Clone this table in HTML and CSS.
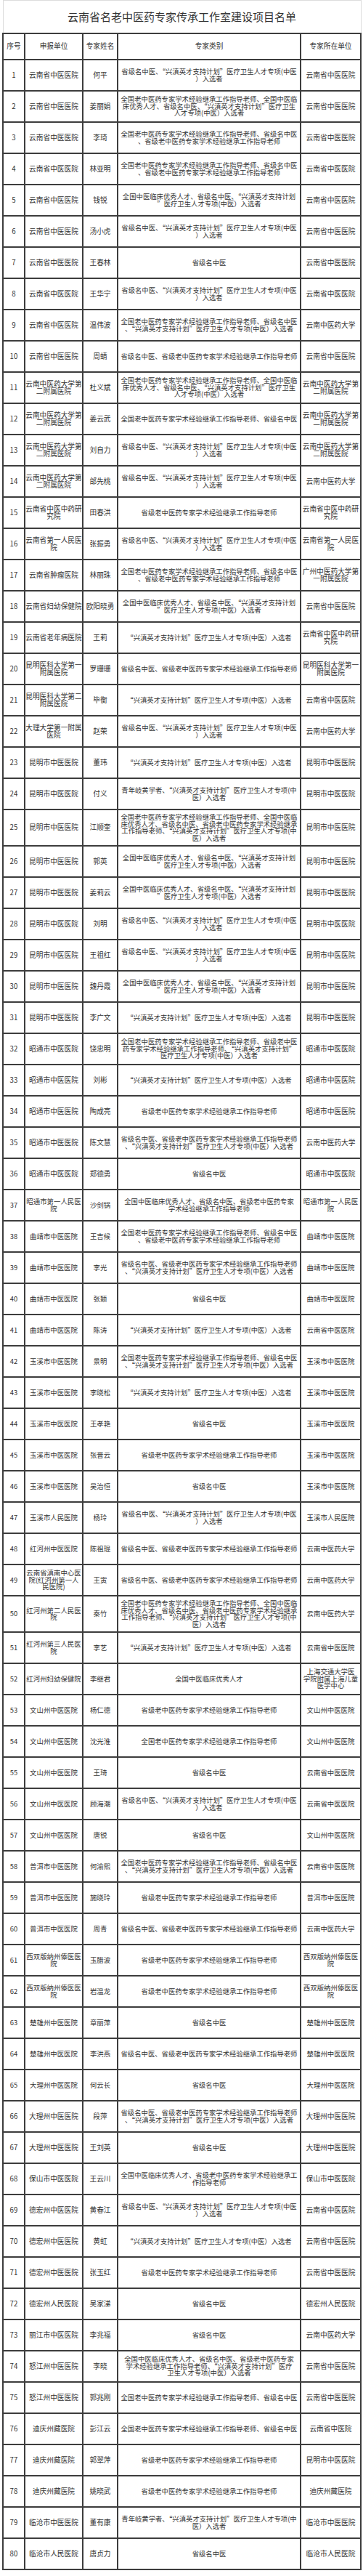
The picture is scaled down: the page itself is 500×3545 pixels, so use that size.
FILE: index.html
```html
<!DOCTYPE html>
<html lang="zh-CN">
<head>
<meta charset="utf-8">
<title>云南省名老中医药专家传承工作室建设项目名单</title>
<link rel="stylesheet" href="styles.css">
</head>
<body>
<table class="sheet">
<colgroup><col class="c1"><col class="c2"><col class="c3"><col class="c4"><col class="c5"></colgroup>
<thead>
<tr class="title"><th colspan="5">云南省名老中医药专家传承工作室建设项目名单</th></tr>
<tr class="head"><th>序号</th><th>申报单位</th><th>专家姓名</th><th>专家类别</th><th>专家所在单位</th></tr>
</thead>
<tbody>
<tr class="l"><td>1</td><td>云南省中医医院</td><td>何平</td><td class="cat">省级名中医、“兴滇英才支持计划”医疗卫生人才专项(中医<br>）入选者</td><td>云南省中医医院</td></tr>
<tr class="l"><td>2</td><td>云南省中医医院</td><td>姜丽娟</td><td class="cat">全国老中医药专家学术经验继承工作指导老师、全国中医临<br>床优秀人才、省级名中医、“兴滇英才支持计划”医疗卫生<br>人才专项(中医）入选者</td><td>云南省中医医院</td></tr>
<tr class="l"><td>3</td><td>云南省中医医院</td><td>李琦</td><td class="cat">全国老中医药专家学术经验继承工作指导老师、省级名中医<br>、省级老中医药专家学术经验继承工作指导老师</td><td>云南省中医医院</td></tr>
<tr class="l"><td>4</td><td>云南省中医医院</td><td>林亚明</td><td class="cat">全国老中医药专家学术经验继承工作指导老师、省级名中医<br>、省级老中医药专家学术经验继承工作指导老师</td><td>云南省中医医院</td></tr>
<tr class="l"><td>5</td><td>云南省中医医院</td><td>钱锐</td><td class="cat">全国中医临床优秀人才、省级名中医、“兴滇英才支持计划<br>”医疗卫生人才专项(中医）入选者</td><td>云南省中医医院</td></tr>
<tr class="l"><td>6</td><td>云南省中医医院</td><td>汤小虎</td><td class="cat">省级名中医、“兴滇英才支持计划”医疗卫生人才专项(中医<br>）入选者</td><td>云南省中医医院</td></tr>
<tr class="l"><td>7</td><td>云南省中医医院</td><td>王春林</td><td class="cat">省级名中医</td><td>云南省中医医院</td></tr>
<tr class="l"><td>8</td><td>云南省中医医院</td><td>王华宁</td><td class="cat">省级名中医、“兴滇英才支持计划”医疗卫生人才专项(中医<br>）入选者</td><td>云南省中医医院</td></tr>
<tr class="l"><td>9</td><td>云南省中医医院</td><td>温伟波</td><td class="cat">全国老中医药专家学术经验继承工作指导老师、省级名中医<br>、“兴滇英才支持计划”医疗卫生人才专项(中医）入选者</td><td>云南中医药大学</td></tr>
<tr class="l"><td>10</td><td>云南省中医医院</td><td>周蜻</td><td class="cat">省级名中医、省级老中医药专家学术经验继承工作指导老师</td><td>云南省中医医院</td></tr>
<tr class="l"><td>11</td><td>云南中医药大学第<br>二附属医院</td><td>杜义斌</td><td class="cat">全国老中医药专家学术经验继承工作指导老师、全国中医临<br>床优秀人才、省级名中医、“兴滇英才支持计划”医疗卫生<br>人才专项(中医）入选者</td><td>云南中医药大学第<br>二附属医院</td></tr>
<tr class="l"><td>12</td><td>云南中医药大学第<br>二附属医院</td><td>姜云武</td><td class="cat">全国老中医药专家学术经验继承工作指导老师、省级名中医</td><td>云南中医药大学第<br>二附属医院</td></tr>
<tr class="l"><td>13</td><td>云南中医药大学第<br>二附属医院</td><td>刘自力</td><td class="cat">省级名中医、“兴滇英才支持计划”医疗卫生人才专项(中医<br>）入选者</td><td>云南中医药大学第<br>二附属医院</td></tr>
<tr class="l"><td>14</td><td>云南中医药大学第<br>二附属医院</td><td>邰先桃</td><td class="cat">省级名中医、“兴滇英才支持计划”医疗卫生人才专项(中医<br>）入选者</td><td>云南中医药大学</td></tr>
<tr class="l"><td>15</td><td>云南省中医中药研<br>究院</td><td>田春洪</td><td class="cat">省级老中医药专家学术经验继承工作指导老师</td><td>云南省中医中药研<br>究院</td></tr>
<tr class="l"><td>16</td><td>云南省第一人民医<br>院</td><td>张振勇</td><td class="cat">省级名中医、“兴滇英才支持计划”医疗卫生人才专项(中医<br>）入选者</td><td>云南省第一人民医<br>院</td></tr>
<tr class="l"><td>17</td><td>云南省肿瘤医院</td><td>林丽珠</td><td class="cat">全国老中医药专家学术经验继承工作指导老师、省级名中医<br>、省级老中医药专家学术经验继承工作指导老师</td><td>广州中医药大学第<br>一附属医院</td></tr>
<tr class="l"><td>18</td><td>云南省妇幼保健院</td><td>欧阳晓勇</td><td class="cat">全国中医临床优秀人才、省级名中医、“兴滇英才支持计划<br>”医疗卫生人才专项(中医）入选者</td><td>云南省中医医院</td></tr>
<tr class="l"><td>19</td><td>云南省老年病医院</td><td>王莉</td><td class="cat">“兴滇英才支持计划”医疗卫生人才专项(中医）入选者</td><td>云南省中医中药研<br>究院</td></tr>
<tr class="l"><td>20</td><td>昆明医科大学第一<br>附属医院</td><td>罗珊珊</td><td class="cat">省级名中医、省级老中医药专家学术经验继承工作指导老师</td><td>昆明医科大学第一<br>附属医院</td></tr>
<tr class="l"><td>21</td><td>昆明医科大学第二<br>附属医院</td><td>毕衡</td><td class="cat">“兴滇英才支持计划”医疗卫生人才专项(中医）入选者</td><td>云南省中医医院</td></tr>
<tr class="l"><td>22</td><td>大理大学第一附属<br>医院</td><td>赵荣</td><td class="cat">省级名中医、“兴滇英才支持计划”医疗卫生人才专项(中医<br>）入选者</td><td>云南中医药大学</td></tr>
<tr class="l"><td>23</td><td>昆明市中医医院</td><td>董玮</td><td class="cat">“兴滇英才支持计划”医疗卫生人才专项(中医）入选者</td><td>昆明市中医医院</td></tr>
<tr class="l"><td>24</td><td>昆明市中医医院</td><td>付义</td><td class="cat">青年岐黄学者、“兴滇英才支持计划”医疗卫生人才专项(中<br>医）入选者</td><td>昆明市中医医院</td></tr>
<tr class="l"><td>25</td><td>昆明市中医医院</td><td>江顺奎</td><td class="cat">全国老中医药专家学术经验继承工作指导老师、全国中医临<br>床优秀人才、省级名中医、省级老中医药专家学术经验继承<br>工作指导老师、“兴滇英才支持计划”医疗卫生人才专项(中<br>医）入选者</td><td>昆明市中医医院</td></tr>
<tr class="l"><td>26</td><td>昆明市中医医院</td><td>郭英</td><td class="cat">全国中医临床优秀人才、省级名中医、“兴滇英才支持计划<br>”医疗卫生人才专项(中医）入选者</td><td>昆明市中医医院</td></tr>
<tr class="l"><td>27</td><td>昆明市中医医院</td><td>姜莉云</td><td class="cat">全国中医临床优秀人才、省级名中医、“兴滇英才支持计划<br>”医疗卫生人才专项(中医）入选者</td><td>昆明市中医医院</td></tr>
<tr class="l"><td>28</td><td>昆明市中医医院</td><td>刘明</td><td class="cat">省级名中医、“兴滇英才支持计划”医疗卫生人才专项(中医<br>）入选者</td><td>昆明市中医医院</td></tr>
<tr class="l"><td>29</td><td>昆明市中医医院</td><td>王祖红</td><td class="cat">省级名中医、“兴滇英才支持计划”医疗卫生人才专项(中医<br>）入选者</td><td>昆明市中医医院</td></tr>
<tr class="l"><td>30</td><td>昆明市中医医院</td><td>魏丹霞</td><td class="cat">全国中医临床优秀人才、省级名中医、“兴滇英才支持计划<br>”医疗卫生人才专项(中医）入选者</td><td>昆明市中医医院</td></tr>
<tr class="l"><td>31</td><td>昆明市中医医院</td><td>李广文</td><td class="cat">“兴滇英才支持计划”医疗卫生人才专项(中医）入选者</td><td>昆明市中医医院</td></tr>
<tr class="l"><td>32</td><td>昭通市中医医院</td><td>饶忠明</td><td class="cat">全国老中医药专家学术经验继承工作指导老师、省级老中医<br>药专家学术经验继承工作指导老师、“兴滇英才支持计划”<br>医疗卫生人才专项(中医）入选者</td><td>昭通市中医医院</td></tr>
<tr class="l"><td>33</td><td>昭通市中医医院</td><td>刘彬</td><td class="cat">“兴滇英才支持计划”医疗卫生人才专项(中医）入选者</td><td>昭通市中医医院</td></tr>
<tr class="l"><td>34</td><td>昭通市中医医院</td><td>陶成亮</td><td class="cat">省级老中医药专家学术经验继承工作指导老师</td><td>昭通市中医医院</td></tr>
<tr class="l"><td>35</td><td>昭通市中医医院</td><td>陈文慧</td><td class="cat">省级名中医、省级老中医药专家学术经验继承工作指导老师<br>、“兴滇英才支持计划”医疗卫生人才专项(中医）入选者</td><td>云南中医药大学</td></tr>
<tr class="l"><td>36</td><td>昭通市中医医院</td><td>郑德勇</td><td class="cat">省级名中医</td><td>昭通市中医医院</td></tr>
<tr class="t"><td>37</td><td>昭通市第一人民医<br>院</td><td>沙剑锅</td><td class="cat">全国中医临床优秀人才、省级名中医、省级老中医药专家<br>学术经验继承工作指导老师</td><td>昭通市第一人民医<br>院</td></tr>
<tr class="t"><td>38</td><td>曲靖市中医医院</td><td>王吉候</td><td class="cat">全国老中医药专家学术经验继承工作指导老师、省级名中医<br>、省级老中医药专家学术经验继承工作指导老师</td><td>曲靖市中医医院</td></tr>
<tr class="t"><td>39</td><td>曲靖市中医医院</td><td>李光</td><td class="cat">省级名中医、省级老中医药专家学术经验继承工作指导老师<br>、“兴滇英才支持计划”医疗卫生人才专项(中医）入选者</td><td>曲靖市中医医院</td></tr>
<tr class="t"><td>40</td><td>曲靖市中医医院</td><td>张颖</td><td class="cat">省级名中医</td><td>曲靖市中医医院</td></tr>
<tr class="t"><td>41</td><td>曲靖市中医医院</td><td>陈涛</td><td class="cat">“兴滇英才支持计划”医疗卫生人才专项(中医）入选者</td><td>云南省中医医院</td></tr>
<tr class="t"><td>42</td><td>玉溪市中医医院</td><td>景明</td><td class="cat">全国老中医药专家学术经验继承工作指导老师、省级名中医<br>、“兴滇英才支持计划”医疗卫生人才专项(中医）入选者</td><td>玉溪市中医医院</td></tr>
<tr class="t"><td>43</td><td>玉溪市中医医院</td><td>李晓松</td><td class="cat">“兴滇英才支持计划”医疗卫生人才专项(中医）入选者</td><td>玉溪市中医医院</td></tr>
<tr class="t"><td>44</td><td>玉溪市中医医院</td><td>王孝艳</td><td class="cat">省级名中医</td><td>玉溪市中医医院</td></tr>
<tr class="t"><td>45</td><td>玉溪市中医医院</td><td>张晋云</td><td class="cat">省级老中医药专家学术经验继承工作指导老师</td><td>玉溪市中医医院</td></tr>
<tr class="t"><td>46</td><td>玉溪市中医医院</td><td>吴治恒</td><td class="cat">省级名中医</td><td>玉溪市中医医院</td></tr>
<tr class="t"><td>47</td><td>玉溪市人民医院</td><td>杨玲</td><td class="cat">省级名中医、“兴滇英才支持计划”医疗卫生人才专项(中医<br>）入选者</td><td>玉溪市人民医院</td></tr>
<tr class="t"><td>48</td><td>红河州中医医院</td><td>陈祖琨</td><td class="cat">省级名中医、省级老中医药专家学术经验继承工作指导老师</td><td>云南中医药大学</td></tr>
<tr class="t"><td>49</td><td>云南省滇南中心医<br>院(红河州第一人<br>民医院)</td><td>王寅</td><td class="cat">省级名中医、省级老中医药专家学术经验继承工作指导老师</td><td>云南中医药大学</td></tr>
<tr class="t"><td>50</td><td>红河州第二人民医<br>院</td><td>秦竹</td><td class="cat">全国老中医药专家学术经验继承工作指导老师、全国中医临<br>床优秀人才、省级名中医、省级老中医药专家学术经验继承<br>工作指导老师、“兴滇英才支持计划”医疗卫生人才专项(中<br>医）入选者</td><td>云南中医药大学</td></tr>
<tr class="t"><td>51</td><td>红河州第三人民医<br>院</td><td>李艺</td><td class="cat">“兴滇英才支持计划”医疗卫生人才专项(中医）入选者</td><td>云南省中医医院</td></tr>
<tr class="t"><td>52</td><td>红河州妇幼保健院</td><td>李继君</td><td class="cat">全国中医临床优秀人才</td><td>上海交通大学医<br>学院附属上海儿童<br>医学中心</td></tr>
<tr class="t"><td>53</td><td>文山州中医医院</td><td>杨仁德</td><td class="cat">省级老中医药专家学术经验继承工作指导老师</td><td>文山州中医医院</td></tr>
<tr class="t"><td>54</td><td>文山州中医医院</td><td>沈光淮</td><td class="cat">全国老中医药专家学术经验继承工作指导老师</td><td>文山州中医医院</td></tr>
<tr class="t"><td>55</td><td>文山州中医医院</td><td>王琦</td><td class="cat">省级名中医</td><td>云南省中医医院</td></tr>
<tr class="t"><td>56</td><td>文山州中医医院</td><td>顾海潮</td><td class="cat">省级名中医、“兴滇英才支持计划”医疗卫生人才专项(中医<br>）入选者</td><td>云南省中医医院</td></tr>
<tr class="t"><td>57</td><td>文山州中医医院</td><td>唐锐</td><td class="cat">省级名中医</td><td>文山州中医医院</td></tr>
<tr class="t"><td>58</td><td>普洱市中医医院</td><td>何渝熙</td><td class="cat">全国老中医药专家学术经验继承工作指导老师、省级名中医<br>、“兴滇英才支持计划”医疗卫生人才专项(中医）入选者</td><td>云南省中医医院</td></tr>
<tr class="t"><td>59</td><td>普洱市中医医院</td><td>施晓玲</td><td class="cat">省级老中医药专家学术经验继承工作指导老师</td><td>普洱市中医医院</td></tr>
<tr class="t"><td>60</td><td>普洱市中医医院</td><td>周青</td><td class="cat">省级名中医、省级老中医药专家学术经验继承工作指导老师</td><td>云南中医药大学</td></tr>
<tr class="t"><td>61</td><td>西双版纳州傣医医<br>院</td><td>玉腊波</td><td class="cat">省级老中医药专家学术经验继承工作指导老师</td><td>西双版纳州傣医医<br>院</td></tr>
<tr class="t"><td>62</td><td>西双版纳州傣医医<br>院</td><td>岩温龙</td><td class="cat">省级老中医药专家学术经验继承工作指导老师</td><td>西双版纳州傣医医<br>院</td></tr>
<tr class="t"><td>63</td><td>楚雄州中医医院</td><td>章丽萍</td><td class="cat">省级名中医</td><td>楚雄州中医医院</td></tr>
<tr class="t"><td>64</td><td>楚雄州中医医院</td><td>李洪燕</td><td class="cat">省级名中医、省级老中医药专家学术经验继承工作指导老师</td><td>楚雄州中医医院</td></tr>
<tr class="t"><td>65</td><td>大理州中医医院</td><td>何云长</td><td class="cat">省级名中医</td><td>大理州中医医院</td></tr>
<tr class="l"><td>66</td><td>大理州中医医院</td><td>段萍</td><td class="cat">省级名中医、省级老中医药专家学术经验继承工作指导老师<br>、“兴滇英才支持计划”医疗卫生人才专项(中医）入选者</td><td>大理州中医医院</td></tr>
<tr class="l"><td>67</td><td>大理州中医医院</td><td>王刘英</td><td class="cat">省级名中医</td><td>大理州中医医院</td></tr>
<tr class="l"><td>68</td><td>保山市中医医院</td><td>王云川</td><td class="cat">全国中医临床优秀人才、省级老中医药专家学术经验继承工<br>作指导老师</td><td>保山市中医医院</td></tr>
<tr class="l"><td>69</td><td>德宏州中医医院</td><td>黄春江</td><td class="cat">省级名中医、“兴滇英才支持计划”医疗卫生人才专项(中医<br>）入选者</td><td>云南省中医医院</td></tr>
<tr class="l"><td>70</td><td>德宏州中医医院</td><td>黄虹</td><td class="cat">“兴滇英才支持计划”医疗卫生人才专项(中医）入选者</td><td>云南省中医医院</td></tr>
<tr class="l"><td>71</td><td>德宏州中医医院</td><td>张玉红</td><td class="cat">省级老中医药专家学术经验继承工作指导老师</td><td>云南省中医医院</td></tr>
<tr class="l"><td>72</td><td>德宏州人民医院</td><td>吴家涕</td><td class="cat">省级名中医</td><td>德宏州人民医院</td></tr>
<tr class="l"><td>73</td><td>丽江市中医医院</td><td>李兆福</td><td class="cat">省级名中医</td><td>云南中医药大学</td></tr>
<tr class="l"><td>74</td><td>怒江州中医医院</td><td>李晓</td><td class="cat">全国中医临床优秀人才、省级名中医、省级老中医药专家<br>学术经验继承工作指导老师、“兴滇英才支持计划”医疗<br>卫生人才专项(中医）入选者</td><td>云南省中医医院</td></tr>
<tr class="l"><td>75</td><td>怒江州中医医院</td><td>郭兆刚</td><td class="cat">全国老中医药专家学术经验继承工作指导老师、省级名中医</td><td>云南省中医医院</td></tr>
<tr class="l"><td>76</td><td>迪庆州藏医院</td><td>彭江云</td><td class="cat">全国老中医药专家学术经验继承工作指导老师、省级名中医</td><td>云南省中医院</td></tr>
<tr class="l"><td>77</td><td>迪庆州藏医院</td><td>郭翠萍</td><td class="cat">省级老中医药专家学术经验继承工作指导老师</td><td>昆明市中医医院</td></tr>
<tr class="l"><td>78</td><td>迪庆州藏医院</td><td>姚晓武</td><td class="cat">省级老中医药专家学术经验继承工作指导老师</td><td>迪庆州藏医院</td></tr>
<tr class="l"><td>79</td><td>临沧市中医医院</td><td>董有康</td><td class="cat">青年岐黄学者、“兴滇英才支持计划”医疗卫生人才专项(中<br>医）入选者</td><td>临沧市中医医院</td></tr>
<tr class="l"><td>80</td><td>临沧市人民医院</td><td>唐贞力</td><td class="cat">省级名中医</td><td>临沧市人民医院</td></tr>
</tbody>
</table>
</body>
</html>
```
FILE: styles.css
```css
html, body {
  margin: 0;
  padding: 0;
  background: #ffffff;
}

body {
  font-family: "Noto Sans CJK SC", "Noto Sans", sans-serif;
  color: #333333;
}

.sheet {
  width: 493px;
  margin-left: 3px;
  border-collapse: collapse;
  table-layout: fixed;
}

.c1 { width: 30px; }
.c2 { width: 80px; }
.c3 { width: 48px; }
.c4 { width: 252px; }
.c5 { width: 83px; }

.sheet th,
.sheet td {
  border: 2px solid #3d3d3d;
  padding: 5px 0;
  text-align: center;
  vertical-align: middle;
  white-space: nowrap;
  font-weight: normal;
  line-height: 9.5px;
}

.title th {
  height: 44px;
  padding: 0;
  font-size: 15px;
  line-height: 20px;
  color: #333333;
  border-top: 1px solid #dcdcdc;
  border-left: 1px solid #dcdcdc;
  border-right: 1px solid #dcdcdc;
  border-bottom: 2px solid #3d3d3d;
}

.head th {
  height: 34px;
  padding: 0;
  font-size: 9.7px;
}

.sheet tbody tr {
  height: 43px;
}

.l td {
  font-size: 9.7px;
}

.t td {
  font-size: 9.42px;
}

.sheet td.cat {
  font-size: 9.35px;
  padding-left: 0;
  padding-right: 0;
}
```
